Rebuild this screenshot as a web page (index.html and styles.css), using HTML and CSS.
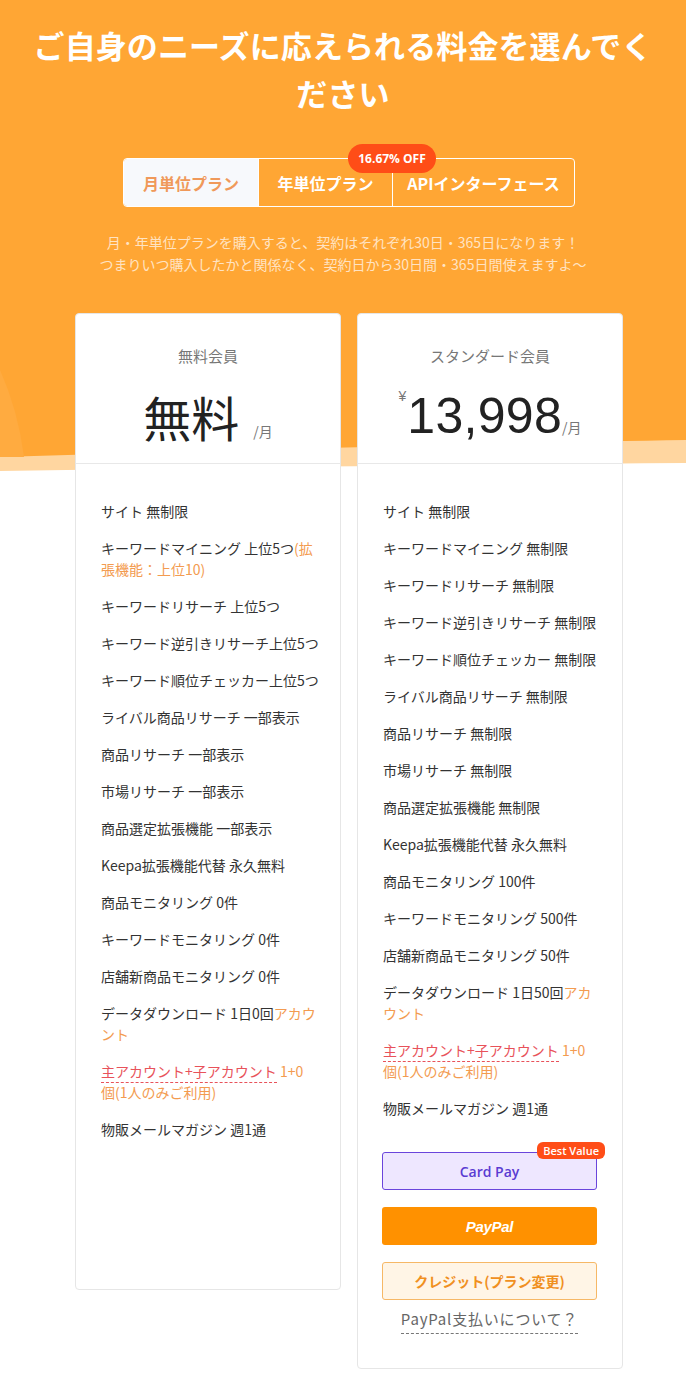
FILE: index.html
```html
<!DOCTYPE html>
<html lang="ja">
<head>
<meta charset="utf-8">
<link rel="stylesheet" href="styles.css">
</head>
<body>
<div class="page">
  <svg class="bg" width="686" height="480" viewBox="0 0 686 480" preserveAspectRatio="none">
    <path d="M0,0 H686 V463 Q400,465 0,471 Z" fill="#FFD6A0"/>
    <path d="M0,0 H686 V440 Q450,444 0,457 Z" fill="#FFA634"/>
    <path d="M0,370 Q18,410 24,457 L0,457 Z" fill="#FFAB40"/>
  </svg>
  <header class="hero">
    <h1 class="title">ご自身のニーズに応えられる料金を選んでく<br>ださい</h1>
    <div class="tabs">
      <div class="tab active">月単位プラン</div>
      <div class="tab">年単位プラン</div>
      <div class="tab wide">APIインターフェース</div>
      <span class="off">16.67% OFF</span>
    </div>
    <p class="note">月・年単位プランを購入すると、契約はそれぞれ30日・365日になります！<br>つまりいつ購入したかと関係なく、契約日から30日間・365日間使えますよ〜</p>
  </header>

  <div class="cards">
    <section class="card card-free">
      <div class="card-head">
        <div class="plan">無料会員</div>
        <div class="price">
          <span class="free">無料</span>
          <span class="per per-free">/月</span>
        </div>
      </div>
      <ul class="features">
        <li>サイト 無制限</li>
        <li>キーワードマイニング 上位5つ<span class="hl">(拡張機能：上位10)</span></li>
        <li>キーワードリサーチ 上位5つ</li>
        <li>キーワード逆引きリサーチ上位5つ</li>
        <li>キーワード順位チェッカー上位5つ</li>
        <li>ライバル商品リサーチ 一部表示</li>
        <li>商品リサーチ 一部表示</li>
        <li>市場リサーチ 一部表示</li>
        <li>商品選定拡張機能 一部表示</li>
        <li>Keepa拡張機能代替 永久無料</li>
        <li>商品モニタリング 0件</li>
        <li>キーワードモニタリング 0件</li>
        <li>店舗新商品モニタリング 0件</li>
        <li>データダウンロード 1日0回<span class="hl">アカウント</span></li>
        <li><span class="acc">主アカウント+子アカウント</span><span class="hl"> 1+0<br>個(1人のみご利用)</span></li>
        <li>物販メールマガジン 週1通</li>
      </ul>
    </section>

    <section class="card card-std">
      <div class="card-head">
        <div class="plan">スタンダード会員</div>
        <div class="price">
          <span class="yen">¥</span><span class="num">13,998</span><span class="per">/月</span>
        </div>
      </div>
      <ul class="features">
        <li>サイト 無制限</li>
        <li>キーワードマイニング 無制限</li>
        <li>キーワードリサーチ 無制限</li>
        <li>キーワード逆引きリサーチ 無制限</li>
        <li>キーワード順位チェッカー 無制限</li>
        <li>ライバル商品リサーチ 無制限</li>
        <li>商品リサーチ 無制限</li>
        <li>市場リサーチ 無制限</li>
        <li>商品選定拡張機能 無制限</li>
        <li>Keepa拡張機能代替 永久無料</li>
        <li>商品モニタリング 100件</li>
        <li>キーワードモニタリング 500件</li>
        <li>店舗新商品モニタリング 50件</li>
        <li>データダウンロード 1日50回<span class="hl">アカウント</span></li>
        <li><span class="acc">主アカウント+子アカウント</span><span class="hl"> 1+0<br>個(1人のみご利用)</span></li>
        <li>物販メールマガジン 週1通</li>
      </ul>
      <div class="actions">
        <div class="btn btn-card">Card Pay<span class="best">Best Value</span></div>
        <div class="btn btn-paypal">PayPal</div>
        <div class="btn btn-credit">クレジット(プラン変更)</div>
        <div class="help"><span>PayPal支払いについて？</span></div>
      </div>
    </section>
  </div>
</div>
</body>
</html>
```

FILE: styles.css
```css
* { box-sizing: border-box; }
html, body { margin: 0; padding: 0; background: #fff; }
body {
  font-family: "Noto Sans CJK JP", "Noto Sans", sans-serif;
  color: #333;
  width: 686px;
}
.page { position: relative; width: 686px; min-height: 1396px; }
.bg { position: absolute; left: 0; top: 0; z-index: 0; display: block; }
.hero { position: relative; z-index: 1; padding-top: 21px; text-align: center; }
.title {
  margin: 0;
  color: #fff;
  font-size: 31px;
  font-weight: 700;
  line-height: 48px;
  letter-spacing: 0.1px;
}
.tabs {
  position: relative;
  margin: 41px 0 0 123px;
  width: 452px;
  height: 49px;
  display: flex;
  border: 1px solid #fff;
  border-radius: 4px;
}
.tab {
  width: 135px;
  display: flex;
  align-items: center;
  justify-content: center;
  color: #fff;
  font-size: 16px;
  font-weight: 700;
  border-right: 1px solid #fff;
}
.tab:nth-child(2) { width: 134px; }
.tab.wide { flex: 1; border-right: none; }
.tab.active { background: #F7F9FC; color: #F0995A; border-radius: 3px 0 0 3px; }
.off {
  position: absolute;
  left: 224px;
  top: -15px;
  width: 88px;
  height: 29px;
  border-radius: 15px;
  background: #FF4D17;
  color: #fff;
  font-family: "Open Sans", "Noto Sans", sans-serif;
  font-size: 12px;
  font-weight: 700;
  display: flex;
  align-items: center;
  justify-content: center;
}
.note {
  margin: 24px 0 0;
  color: #FFE3C2;
  font-size: 14px;
  line-height: 22px;
}
.cards {
  position: relative;
  z-index: 1;
  display: flex;
  align-items: flex-start;
  gap: 16px;
  padding-left: 75px;
  margin-top: 38px;
}
.card {
  width: 266px;
  background: #fff;
  border: 1px solid #E6E6E6;
  border-radius: 4px;
}
.card-free { height: 977px; }
.card-std { height: 1056px; }
.card-head {
  height: 150px;
  border-bottom: 1px solid #E8E8E8;
  padding-top: 31px;
  text-align: center;
}
.plan { color: #777; font-size: 15px; line-height: 22px; }
.price {
  margin-top: 21px;
  height: 56px;
  display: flex;
  align-items: baseline;
  justify-content: center;
}
.free { font-size: 48px; line-height: 56px; color: #222; margin-left: 0; }
.per { font-size: 14px; color: #777; }
.per-free { margin-left: 14px; }
.yen {
  align-self: flex-start;
  font-family: "Liberation Sans", sans-serif;
  font-size: 14px;
  color: #777;
  margin-top: 0;
  margin-right: 1px;
}
.num {
  font-family: "Liberation Sans", sans-serif;
  font-size: 50px;
  line-height: 56px;
  color: #222;
  letter-spacing: 0.3px;
}
.features {
  list-style: none;
  margin: 0;
  padding: 37px 18px 0 25px;
  display: flex;
  flex-direction: column;
  gap: 16px;
  font-size: 14px;
  line-height: 21px;
  color: #333;
}
.hl { color: #F39B50; }
.acc {
  color: #E8525A;
  border-bottom: 1px dashed #E8525A;
  padding-bottom: 1px;
}
.actions {
  padding: 33px 25px 0 24px;
  display: flex;
  flex-direction: column;
  gap: 17px;
}
.btn {
  position: relative;
  height: 38px;
  border-radius: 3px;
  display: flex;
  align-items: center;
  justify-content: center;
  font-size: 14px;
  font-weight: 700;
}
.btn-card {
  background: #EEE7FF;
  border: 1px solid #6A45DC;
  color: #5A3BD2;
  font-family: "Open Sans", "Noto Sans", sans-serif;
  font-weight: 600;
  font-size: 14px;
}
.best {
  position: absolute;
  right: -9px;
  top: -11px;
  height: 17px;
  padding: 0 6px;
  border-radius: 6px;
  background: #FF4D17;
  color: #fff;
  font-size: 11px;
  font-weight: 600;
  line-height: 17px;
}
.btn-paypal {
  background: #FF9100;
  color: #fff;
  font-family: "Liberation Sans", sans-serif;
  font-style: italic;
  font-weight: 700;
  font-size: 15px;
  letter-spacing: -0.3px;
}
.btn-credit {
  background: #FFF5E6;
  border: 1px solid #F6B866;
  color: #F0901F;
  font-size: 14px;
}
.help {
  margin-top: -9px;
  text-align: center;
  font-size: 15px;
  color: #666;
  letter-spacing: 0.8px;
}
.help span {
  display: inline-block;
  line-height: 22px;
  padding-bottom: 3px;
  border-bottom: 1px dashed #777;
}
```
